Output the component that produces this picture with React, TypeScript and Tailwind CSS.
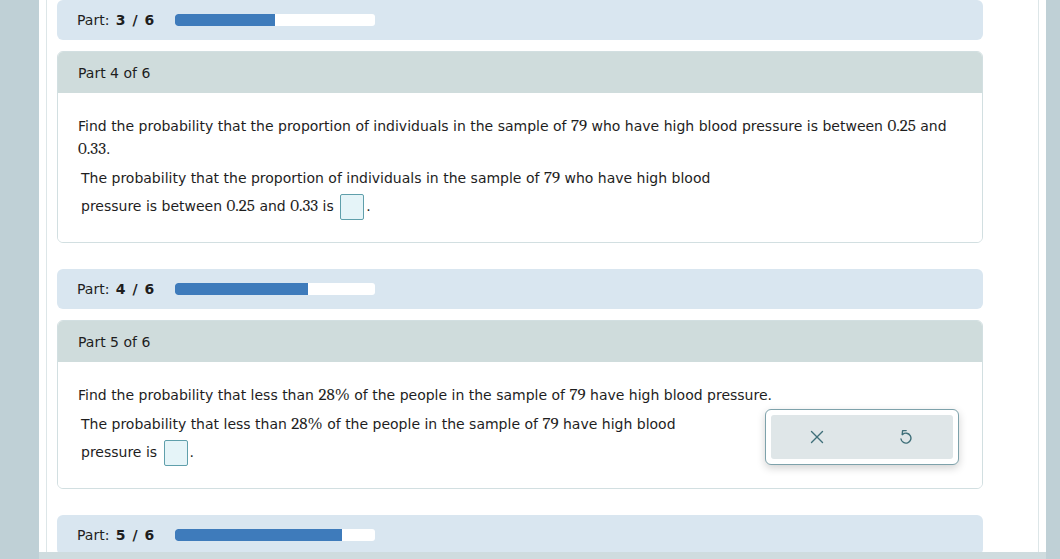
import { X } from 'lucide-react';

function Num({ children }: { children: React.ReactNode }) {
  return <span className="font-serif text-[17px] leading-[14px]">{children}</span>;
}

function AnswerBox() {
  return <span className="inline-block w-[24px] h-[26px] align-middle border border-[#5f9fab] bg-[#e5f4f8] rounded-[2px] mx-[2px]" />;
}

function ProgressStrip({ part, total }: { part: number; total: number }) {
  const pct = (part / total) * 100;
  return (
    <div className="h-[40px] w-[926px] shrink-0 bg-[#d9e6f0] rounded-md flex items-center pl-[20px]">
      <span className="w-[98px] text-[14px]">
        Part: <span className="font-bold tracking-[1px] ml-[2px]">{part} / {total}</span>
      </span>
      <div className="w-[200px] h-[12px] bg-white rounded-[3px] overflow-hidden">
        <div className="h-full bg-[#3e7bbb] rounded-l-[3px]" style={{ width: `${pct}%` }} />
      </div>
    </div>
  );
}

function PartCard({ n, children }: { n: number; children: React.ReactNode }) {
  return (
    <div className="w-[926px] shrink-0 rounded-md border border-[#d2dfe1] overflow-hidden">
      <div className="h-[41px] bg-[#cfdcdc] flex items-center pl-[20px] pt-[1px] text-[14px]">Part {n} of 6</div>
      <div className="bg-white pl-[20px] pr-[20px] pt-[22px] pb-[22px] text-[14px]">{children}</div>
    </div>
  );
}

function ResetPopup() {
  return (
    <div className="absolute left-[708px] top-[89px] w-[194px] h-[56px] bg-white border border-[#7ea2ab] rounded-[6px] shadow-[0_3px_8px_rgba(0,0,0,0.18)] p-[5px]">
      <div className="h-full bg-[#dfe6e8] rounded-[3px] flex items-center">
        <div className="flex-1 flex justify-center pl-[2px]">
          <X className="w-[22px] h-[22px] text-[#3f6f79]" strokeWidth={1.5} />
        </div>
        <div className="flex-1 flex justify-center pr-[4px]">
          <svg width="14" height="16" viewBox="0 0 14 16" fill="none" stroke="#3f6f79" strokeWidth="1.4" strokeLinecap="round" strokeLinejoin="round">
            <polyline points="8.2,1.6 4.6,1.6 4.2,5.6" />
            <path d="M4.6 5.4 A5 5 0 1 1 3 10" />
          </svg>
        </div>
      </div>
    </div>
  );
}

export default function App() {
  return (
    <div className="w-[1060px] h-[559px] flex overflow-hidden font-['DejaVu_Sans',sans-serif] text-[#1e1e1e]">
      <div className="w-[39px] shrink-0 bg-[#bfd0d6]" />
      <div className="w-[1007px] shrink-0 flex flex-col bg-white">
        <div className="flex-1 overflow-hidden pl-[7px] pr-[7px]">
          <div className="h-full border-l border-r border-[#dde6e8] pl-[10px] flex flex-col">
            <ProgressStrip part={3} total={6} />
            <div className="mt-[11px]">
              <PartCard n={4}>
                <p className="leading-[23px]">
                  Find the probability that the proportion of individuals in the sample of <Num>79</Num> who have high blood pressure is between <Num>0.25</Num> and <Num>0.33</Num>.
                </p>
                <p className="mt-[3px] leading-[28px] max-w-[650px] pl-[3px]">
                  The probability that the proportion of individuals in the sample of <Num>79</Num> who have high blood pressure is between <Num>0.25</Num> and <Num>0.33</Num> is <AnswerBox />.
                </p>
              </PartCard>
            </div>
            <div className="mt-[26px]">
              <ProgressStrip part={4} total={6} />
            </div>
            <div className="mt-[11px] relative">
              <PartCard n={5}>
                <p className="leading-[23px]">
                  Find the probability that less than <Num>28%</Num> of the people in the sample of <Num>79</Num> have high blood pressure.
                </p>
                <p className="mt-[3px] leading-[28px] max-w-[650px] pl-[3px]">
                  The probability that less than <Num>28%</Num> of the people in the sample of <Num>79</Num> have high blood pressure is <AnswerBox />.
                </p>
              </PartCard>
              <ResetPopup />
            </div>
            <div className="mt-[26px]">
              <ProgressStrip part={5} total={6} />
            </div>
          </div>
        </div>
        <div className="h-[7px] shrink-0 bg-[#cfdcdf]" />
      </div>
      <div className="flex-1 bg-[#bfd0d6]" />
    </div>
  );
}
